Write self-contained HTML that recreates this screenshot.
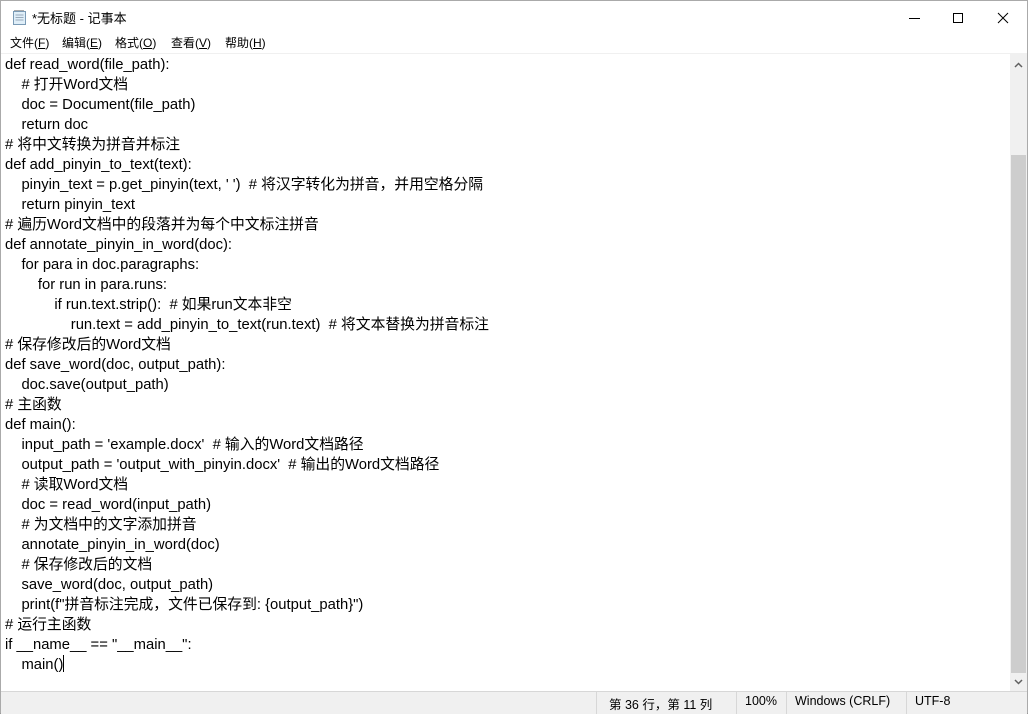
<!DOCTYPE html>
<html><head><meta charset="utf-8"><style>
body{margin:0;width:1028px;height:714px;overflow:hidden;background:#fff;font-family:"Liberation Sans","Noto Sans CJK SC",sans-serif;position:relative}
.win{position:absolute;left:0;top:0;width:1026px;height:712px;border:1px solid #aaa;border-bottom-color:#888}
.title{position:absolute;top:0;left:0;right:0;height:33px;background:#fff;font-size:13px}
.title .t{position:absolute;left:31px;top:7px;color:#000}
.menu{position:absolute;top:33px;left:0;right:0;height:19px;font-size:12px;background:#fff;border-bottom:1px solid #f0f0f0}
.menu span{position:absolute;top:0px}
.code{position:absolute;left:4px;top:54px;font-size:14.8px;line-height:20px;color:#000;white-space:pre}
.code div{height:20px}
.sb{position:absolute;left:1009px;top:53px;width:17px;height:637px;background:#f0f0f0}
.thumb{position:absolute;left:1px;top:101px;width:15px;height:518px;background:#cdcdcd}
.status{position:absolute;left:0;right:0;top:690px;height:22px;background:#f0f0f0;border-top:1px solid #d7d7d7;font-size:12.5px}
.status span{position:absolute;top:2px}
.div{position:absolute;top:0;width:1px;height:22px;background:#d7d7d7}
</style></head><body><div class="win">
<div class="title">
<svg style="position:absolute;left:11px;top:8px" width="16" height="17" viewBox="0 0 16 17"><rect x="1.5" y="2.5" width="12" height="13" fill="#dfeef8" stroke="#7a9ab5"/><path d="M3 2v-1M5 2v-1M7 2v-1M9 2v-1M11 2v-1" stroke="#555"/><path d="M3.5 6h8M3.5 8.5h8M3.5 11h8" stroke="#9ab"/></svg>
<span class="t">*无标题 - 记事本</span>
<svg style="position:absolute;left:908px;top:10px" width="110" height="14"><path d="M0 7.5h11" stroke="#000"/><rect x="44.5" y="2.5" width="9" height="9" fill="none" stroke="#000"/><path d="M89 2l10 10M99 2l-10 10" stroke="#000"/></svg>
</div>
<div class="menu"><span style="left:9px">文件(<u>F</u>)</span><span style="left:61px">编辑(<u>E</u>)</span><span style="left:114px">格式(<u>O</u>)</span><span style="left:170px">查看(<u>V</u>)</span><span style="left:224px">帮助(<u>H</u>)</span></div>
<div class="code"><div>def read_word(file_path):</div><div>    # 打开Word文档</div><div>    doc = Document(file_path)</div><div>    return doc</div><div># 将中文转换为拼音并标注</div><div>def add_pinyin_to_text(text):</div><div>    pinyin_text = p.get_pinyin(text, ' ')  # 将汉字转化为拼音，并用空格分隔</div><div>    return pinyin_text</div><div># 遍历Word文档中的段落并为每个中文标注拼音</div><div>def annotate_pinyin_in_word(doc):</div><div>    for para in doc.paragraphs:</div><div>        for run in para.runs:</div><div>            if run.text.strip():  # 如果run文本非空</div><div>                run.text = add_pinyin_to_text(run.text)  # 将文本替换为拼音标注</div><div># 保存修改后的Word文档</div><div>def save_word(doc, output_path):</div><div>    doc.save(output_path)</div><div># 主函数</div><div>def main():</div><div>    input_path = 'example.docx'  # 输入的Word文档路径</div><div>    output_path = 'output_with_pinyin.docx'  # 输出的Word文档路径</div><div>    # 读取Word文档</div><div>    doc = read_word(input_path)</div><div>    # 为文档中的文字添加拼音</div><div>    annotate_pinyin_in_word(doc)</div><div>    # 保存修改后的文档</div><div>    save_word(doc, output_path)</div><div>    print(f"拼音标注完成，文件已保存到: {output_path}")</div><div># 运行主函数</div><div>if __name__ == "__main__":</div><div>    main()<span style="display:inline-block;width:1px;height:17px;background:#000;vertical-align:-3px"></span></div></div>
<div class="sb"><svg style="position:absolute;left:4px;top:8px" width="9" height="6"><path d="M1 5l3.5-3.5L8 5" fill="none" stroke="#606060" stroke-width="1.5"/></svg><div class="thumb"></div><svg style="position:absolute;left:4px;top:625px" width="9" height="6"><path d="M1 1l3.5 3.5L8 1" fill="none" stroke="#606060" stroke-width="1.5"/></svg></div>
<div class="status"><div class="div" style="left:595px"></div><div class="div" style="left:735px"></div><div class="div" style="left:785px"></div><div class="div" style="left:905px"></div>
<span style="left:608px">第 36 行，第 11 列</span><span style="left:744px">100%</span><span style="left:794px">Windows (CRLF)</span><span style="left:914px">UTF-8</span></div>
</div></body></html>
